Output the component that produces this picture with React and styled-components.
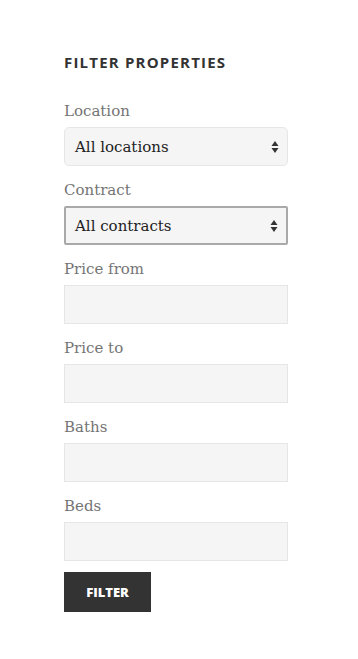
import styled, { createGlobalStyle } from 'styled-components';

const GlobalStyle = createGlobalStyle`
  body {
    margin: 0;
    background: #fff;
  }
`;

const fields = [
  { label: 'Location', type: 'select', value: 'All locations' },
  { label: 'Contract', type: 'select', value: 'All contracts', focused: true },
  { label: 'Price from' },
  { label: 'Price to' },
  { label: 'Baths' },
  { label: 'Beds' },
];

export default function App() {
  return (
    <>
      <GlobalStyle />
      <Widget>
        <Title>Filter properties</Title>
        <Form onSubmit={e => e.preventDefault()}>
          {fields.map(field => (
            <Field key={field.label}>
              <Label>{field.label}</Label>
              {field.type === 'select' ? (
                <Select $focused={field.focused}>
                  <span>{field.value}</span>
                  <Arrows viewBox="0 0 8 14" aria-hidden="true">
                    <path d="M4 1 L7.5 6 H0.5 Z" />
                    <path d="M4 13 L7.5 8 H0.5 Z" />
                  </Arrows>
                </Select>
              ) : (
                <Input type="text" />
              )}
            </Field>
          ))}
          <Button type="submit">Filter</Button>
        </Form>
      </Widget>
    </>
  );
}

const Widget = styled.aside`
  width: 224px;
  padding: 52px 0 40px 64px;
`;

const Title = styled.h3`
  margin: 0 0 26px;
  font-family: 'Open Sans', 'Noto Sans', sans-serif;
  font-size: 15px;
  font-weight: 700;
  line-height: 20px;
  letter-spacing: 1.2px;
  text-transform: uppercase;
  color: #333;
`;

const Form = styled.form`
  display: flex;
  flex-direction: column;
`;

const Field = styled.div`
  display: flex;
  flex-direction: column;
  margin-bottom: 11px;
`;

const Label = styled.label`
  padding-top: 2px;
  margin-bottom: 5px;
  font-family: 'DejaVu Serif', 'Liberation Serif', serif;
  font-size: 15px;
  line-height: 22px;
  color: #747474;
`;

const Select = styled.div`
  box-sizing: border-box;
  height: 39px;
  display: flex;
  align-items: center;
  justify-content: space-between;
  padding: 0 8px 0 ${p => (p.$focused ? '9px' : '10px')};
  background: #f5f5f5;
  border: ${p => (p.$focused ? '2px solid #a9a9a9' : '1px solid #e6e6e6')};
  border-radius: ${p => (p.$focused ? '2px' : '5px')};
  font-family: 'DejaVu Serif', 'Liberation Serif', serif;
  font-size: 15px;
  color: #222;
`;

const Arrows = styled.svg`
  width: 8px;
  height: 14px;
  fill: #333;
`;

const Input = styled.input`
  box-sizing: border-box;
  height: 39px;
  width: 100%;
  margin: 0;
  padding: 0 10px;
  background: #f5f5f5;
  border: 1px solid #e6e6e6;
  border-radius: 0;
  outline: none;
`;

const Button = styled.button`
  align-self: flex-start;
  width: 87px;
  height: 40px;
  padding: 0;
  border: none;
  border-radius: 0;
  background: #333;
  color: #fff;
  font-family: 'Open Sans', 'Noto Sans', sans-serif;
  font-size: 13px;
  font-weight: 800;
  text-transform: uppercase;
  cursor: pointer;
`;
